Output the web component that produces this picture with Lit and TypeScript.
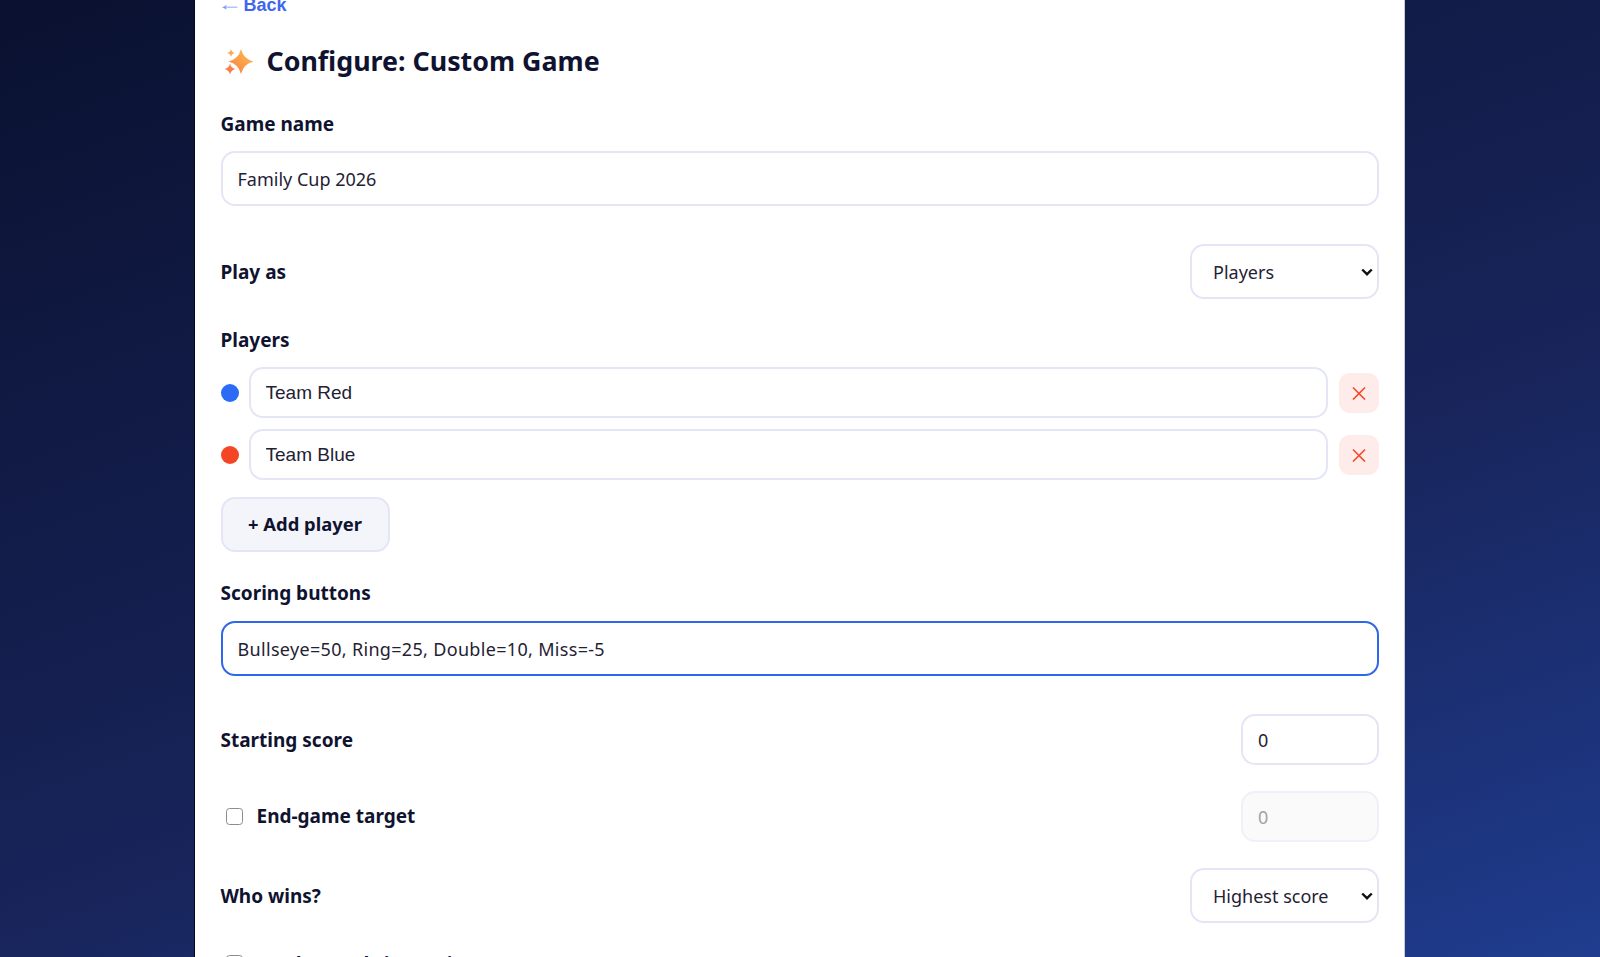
import { LitElement, html, css } from "lit";
import { customElement } from "lit/decorators.js";

@customElement("app-root")
export class AppRoot extends LitElement {
  static styles = css`
    :host {
      display: block;
      height: 100vh;
      overflow: hidden;
      background: linear-gradient(160deg, #0a1130 0%, #18245a 60%, #1f3c8e 100%);
      font-family: "Noto Sans", "Open Sans", sans-serif;
      color: #0f1330;
    }
    .card {
      box-sizing: border-box;
      width: 1211px;
      height: 1100px;
      margin: -5px 0 0 194px;
      padding: 0 25px 0 25.5px;
      background: #fff;
      border-left: 1px solid #05071a;
      border-right: 1px solid #c9ccd8;
    }
    .back {
      display: block;
      height: 20px;
      font: bold 18px/20px "Liberation Sans", Arial, sans-serif;
      color: #3f66f0;
      text-decoration: none;
    }
    .arrow {
      display: inline-block;
      font-weight: 400;
      color: #7d96f4;
      transform: translateY(-1px) scaleX(1.4);
      transform-origin: left center;
      margin: 0 4px 0 -4px;
    }
    h1 {
      display: flex;
      align-items: center;
      gap: 12px;
      margin: 27px 0 0;
      height: 38px;
      font-size: 26.8px;
      font-weight: 700;
      line-height: 38px;
    }
    .spark { width: 34px; height: 34px; }
    .label, .rowlabel {
      font-size: 19px;
      font-weight: 700;
      line-height: 26px;
    }
    .label { margin: 0 0 14px; }
    .label.wide { margin-bottom: 15px; }
    .mt31 { margin-top: 31px; }
    .mt28 { margin-top: 28px; }
    .mt26 { margin-top: 26px; }
    .mt38 { margin-top: 38px; }
    input[type="text"], input[type="number"], select {
      box-sizing: border-box;
      border: 2.5px solid #e4e6f6;
      border-radius: 14px;
      background: #fff;
      color: #1f2233;
      font-family: "Noto Sans", "Open Sans", sans-serif;
      font-size: 18px;
      outline: none;
      margin: 0;
    }
    .field {
      display: block;
      width: 100%;
      height: 55px;
      padding: 0 15px;
    }
    .field.focus {
      border-color: #2f66ee;
      letter-spacing: 0.32px;
    }
    .row {
      display: flex;
      align-items: center;
      justify-content: space-between;
    }
    select {
      width: 189px;
      height: 55px;
      padding: 0 21px;
      appearance: none;
      -webkit-appearance: none;
      background: #fff url("data:image/svg+xml,%3Csvg xmlns='http://www.w3.org/2000/svg' width='12' height='8' viewBox='0 0 12 8'%3E%3Cpath d='M1.2 1.5 6 6.200 10.800 1.500' fill='none' stroke='%23111' stroke-width='2.400'/%3E%3C/svg%3E") no-repeat right 4.500px center;
    }
    .num {
      width: 138px;
      height: 51px;
      padding: 0 15px;
      color: #000;
    }
    .num:disabled {
      background: #fafafa;
      border-color: #f0f0f8;
      color: #a3a3a3;
    }
    .player {
      display: flex;
      align-items: center;
      gap: 10px;
      margin-bottom: 11px;
    }
    .player .remove { margin-left: 1px; }
    .dot {
      flex: none;
      width: 18px;
      height: 18px;
      border-radius: 50%;
    }
    .pname {
      flex: 1;
      min-width: 0;
      height: 51px;
      padding: 0 15px;
      font-family: "Liberation Sans", Arial, sans-serif !important;
      font-size: 19px !important;
    }
    .remove {
      flex: none;
      display: flex;
      align-items: center;
      justify-content: center;
      width: 40px;
      height: 40px;
      padding: 0;
      border: none;
      border-radius: 11px;
      background: #fdecea;
    }
    .add {
      display: block;
      box-sizing: border-box;
      width: 169px;
      height: 55px;
      margin-top: 17px;
      padding: 0 0 2px;
      border: 2.5px solid #e4e6f6;
      border-radius: 14px;
      background: #f4f5fb;
      color: #0f1330;
      font: 700 18.4px "Noto Sans", sans-serif;
    }
    .check {
      display: flex;
      align-items: center;
      gap: 14px;
      font-size: 19px;
      font-weight: 700;
      line-height: 26px;
    }
    .check span { padding-bottom: 2px; }
    .check input {
      appearance: none;
      -webkit-appearance: none;
      box-sizing: border-box;
      width: 17px;
      height: 17px;
      margin: 0 0 0 5px;
      border: 1.5px solid #8c8c8c;
      border-radius: 3.5px;
      background: #fff;
    }
    .check input.up { margin-bottom: 3px; }
  `;

  render() {
    const x = html`<svg width="14" height="14" viewBox="0 0 14 14"><path d="M1 1.500 13 13.500M13 1.500 1 13.500" fill="none" stroke="#f4472a" stroke-width="1.600"/></svg>`;
    return html`
      <div class="card">
        <a class="back" href="#"><span class="arrow">←</span> Back</a>
        <h1>
          <svg class="spark" viewBox="0 0 34 34">
            <defs>
              <linearGradient id="g" x1="1" y1="0" x2="0" y2="1">
                <stop offset="0" stop-color="#fdc552"/>
                <stop offset="1" stop-color="#f97843"/>
              </linearGradient>
            </defs>
            <path fill="url(#g)" d="M20 5Q22.500 15 32.500 17.500 22.500 20 20 30 17.500 20 7.500 17.500 17.500 15 20 5Z"/>
            <path fill="#fbab56" d="M10 5Q10.700 8.300 14 9 10.700 9.700 10 13 9.300 9.700 6 9 9.300 8.300 10 5Z"/>
            <path fill="#f97f4c" d="M9 19.500Q10 24 14.500 25 10 26 9 30.500 8 26 3.500 25 8 24 9 19.500Z"/>
          </svg>
          Configure: Custom Game
        </h1>

        <div class="label mt31">Game name</div>
        <input class="field" type="text" .value=${"Family Cup 2026"} />

        <div class="row mt38">
          <span class="rowlabel">Play as</span>
          <select><option>Players</option><option>Teams</option></select>
        </div>

        <div class="label mt28">Players</div>
        <div class="player">
          <span class="dot" style="background:#2b6bf5"></span>
          <input class="pname" type="text" .value=${"Team Red"} />
          <button class="remove">${x}</button>
        </div>
        <div class="player">
          <span class="dot" style="background:#f54527"></span>
          <input class="pname" type="text" .value=${"Team Blue"} />
          <button class="remove">${x}</button>
        </div>
        <button class="add">+ Add player</button>

        <div class="label wide mt28">Scoring buttons</div>
        <input class="field focus" type="text" .value=${"Bullseye=50, Ring=25, Double=10, Miss=-5"} />

        <div class="row mt38">
          <span class="rowlabel">Starting score</span>
          <input class="num" type="number" .value=${"0"} />
        </div>

        <div class="row mt26">
          <label class="check"><input type="checkbox" /><span>End-game target</span></label>
          <input class="num" type="number" disabled .value=${"0"} />
        </div>

        <div class="row mt26">
          <span class="rowlabel">Who wins?</span>
          <select><option>Highest score</option><option>Lowest score</option></select>
        </div>

        <div class="row mt28">
          <label class="check"><input class="up" type="checkbox" /><span>Track rounds in session</span></label>
        </div>
      </div>
    `;
  }
}
